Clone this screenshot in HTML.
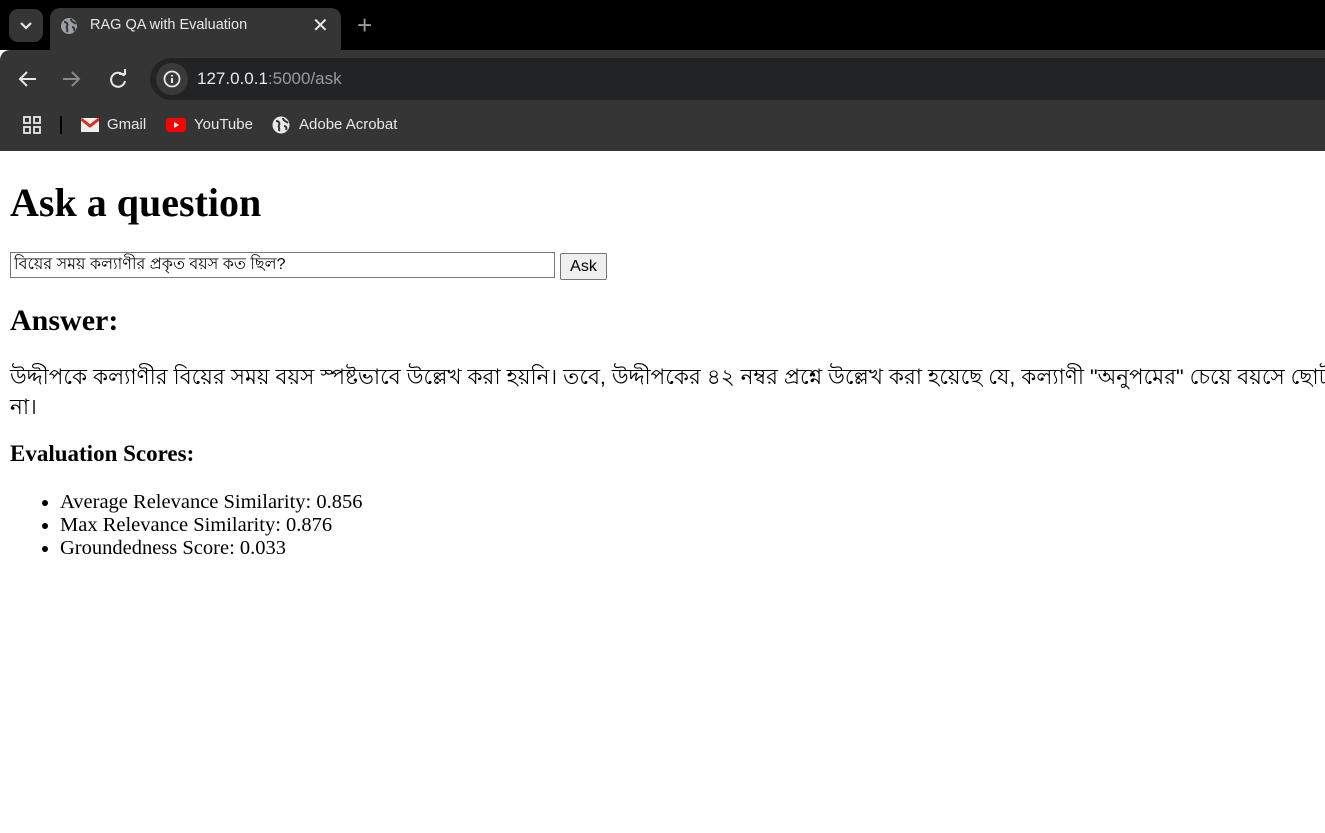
<!DOCTYPE html>
<html><head><meta charset="utf-8"><style>
*{box-sizing:border-box}
body{margin:0;width:1325px;height:833px;overflow:hidden;background:#fff;font-family:"Liberation Serif",serif}
.top{position:absolute;left:0;top:0;width:1325px;height:50px;background:#000}
.tab{position:absolute;left:50px;top:8px;width:291px;height:42px;background:#353535;border-radius:10px 10px 0 0;color:#e8e8e8;font:14.5px "Liberation Sans",sans-serif}
.drop{position:absolute;left:9px;top:9px;width:34px;height:33px;background:#353535;border-radius:9px}
.bar{position:absolute;left:0;top:50px;width:1325px;height:101px;background:#353535;border-radius:10px 0 0 0}
.url{position:absolute;left:150px;top:58px;width:1200px;height:42px;background:#222325;border-radius:21px;font:17px "Liberation Sans",sans-serif;color:#e8e8e8}
.bm{position:absolute;top:116px;font:15px "Liberation Sans",sans-serif;color:#e8e8e8}
h1{position:absolute;left:10px;top:179px;margin:0;font-size:40px;font-weight:bold}
h2{position:absolute;left:10px;top:304px;margin:0;font-size:30px}
h3{position:absolute;left:10px;top:441px;margin:0;font-size:23px}
.in{position:absolute;left:10px;top:252px;width:545px;height:26px;border:1px solid #767676;font:16px "Liberation Sans",sans-serif;padding:0 3px;line-height:24px}
.btn{position:absolute;left:560px;top:253px;width:47px;height:27px;border:1px solid #767676;border-radius:2px;background:#efefef;font:16px "Liberation Sans",sans-serif;text-align:center;line-height:25px}
.ans{position:absolute;left:10px;top:362px;width:1340px;font:21.5px "Liberation Sans",sans-serif;line-height:30px;white-space:nowrap}
ul{position:absolute;left:0;top:491px;margin:0;padding-left:60px;font-size:20.5px;line-height:23px}
</style></head><body>
<div class="top"></div>
<div class="drop"><svg width="34" height="33"><path d="M12 14l5 5 5-5" stroke="#e8e8e8" stroke-width="2.2" fill="none"/></svg></div>
<div class="tab">
<svg style="position:absolute;left:10px;top:9px" width="18" height="18" viewBox="0 0 18 18"><circle cx="9" cy="9" r="8" fill="#9aa0a6"/><path d="M4 5c3 0 4 2 3 4s1 3 0 6M11 2c0 3 3 3 5 5M12 10c2 0 3 2 2 4" stroke="#353535" stroke-width="2" fill="none"/></svg>
<span style="position:absolute;left:40px;top:9px">RAG QA with Evaluation</span>
<span style="position:absolute;left:262px;top:5px;font-size:20px">✕</span>
</div>
<span style="position:absolute;left:357px;top:10px;color:#9a9a9a;font:26px 'Liberation Sans',sans-serif">+</span>
<div class="bar"></div>
<svg style="position:absolute;left:16px;top:68px" width="120" height="22"><path d="M20 11H5M11 4l-7 7 7 7" stroke="#e8e8e8" stroke-width="2" fill="none"/><path d="M47 11h15M56 4l7 7-7 7" stroke="#8a8a8a" stroke-width="2" fill="none"/><path d="M108 8a7 7 0 1 0 1 5" stroke="#e8e8e8" stroke-width="2" fill="none"/><path d="M103 6h6V1" stroke="#e8e8e8" stroke-width="2" fill="none"/></svg>
<div class="url"><div style="position:absolute;left:6px;top:5px;width:32px;height:32px;border-radius:16px;background:#3a3a3a"></div>
<svg style="position:absolute;left:13px;top:12px" width="18" height="18"><circle cx="9" cy="9" r="7.5" stroke="#e8e8e8" stroke-width="1.8" fill="none"/><path d="M9 8v5M9 5v1.5" stroke="#e8e8e8" stroke-width="2"/></svg>
<span style="position:absolute;left:47px;top:11px">127.0.0.1<span style="color:#9a9a9a">:5000/ask</span></span></div>
<svg style="position:absolute;left:23px;top:116px" width="20" height="20"><g fill="none" stroke="#e8e8e8" stroke-width="1.8"><rect x="1" y="1" width="6" height="6"/><rect x="11" y="1" width="6" height="6"/><rect x="1" y="11" width="6" height="6"/><rect x="11" y="11" width="6" height="6"/></g></svg>
<div style="position:absolute;left:60px;top:116px;width:2px;height:18px;background:#000"></div>
<svg style="position:absolute;left:81px;top:118px" width="18" height="14"><rect width="18" height="14" fill="#eee"/><path d="M0 1l9 7 9-7" stroke="#d93025" stroke-width="3" fill="none"/></svg>
<span class="bm" style="left:107px">Gmail</span>
<svg style="position:absolute;left:166px;top:118px" width="20" height="14"><rect width="20" height="14" rx="3" fill="#f00"/><path d="M8 4v6l5-3z" fill="#fff"/></svg>
<span class="bm" style="left:194px">YouTube</span>
<svg style="position:absolute;left:272px;top:116px" width="18" height="18"><circle cx="9" cy="9" r="8.5" fill="#e8e8e8"/><path d="M4 5c3 0 4 2 3 4s1 3 0 6M11 2c0 3 3 3 5 5M12 10c2 0 3 2 2 4" stroke="#353535" stroke-width="2" fill="none"/></svg>
<span class="bm" style="left:299px">Adobe Acrobat</span>

<h1>Ask a question</h1>
<div class="in">বিয়ের সময় কল্যাণীর প্রকৃত বয়স কত ছিল?</div>
<div class="btn">Ask</div>
<h2>Answer:</h2>
<div class="ans">উদ্দীপকে কল্যাণীর বিয়ের সময় বয়স স্পষ্টভাবে উল্লেখ করা হয়নি। তবে, উদ্দীপকের ৪২ নম্বর প্রশ্নে উল্লেখ করা হয়েছে যে, কল্যাণী "অনুপমের" চেয়ে বয়সে ছোট<br>না।</div>
<h3>Evaluation Scores:</h3>
<ul><li>Average Relevance Similarity: 0.856</li><li>Max Relevance Similarity: 0.876</li><li>Groundedness Score: 0.033</li></ul>
</body></html>
